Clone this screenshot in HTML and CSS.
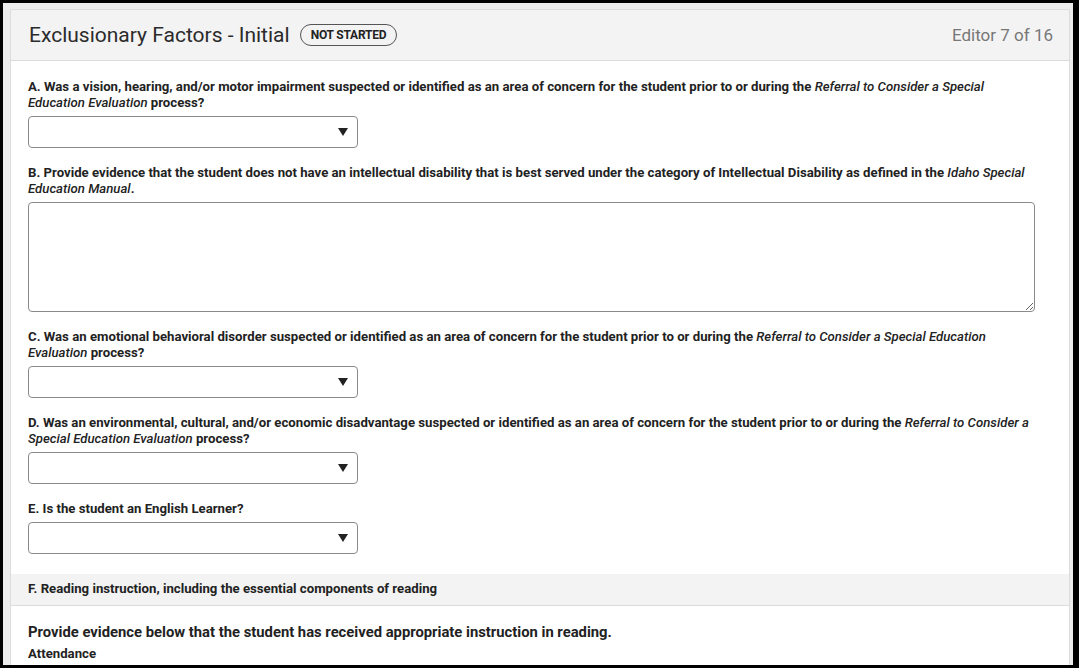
FILE: index.html
```html
<!DOCTYPE html>
<html lang="en">
<head>
    <meta charset="UTF-8">
    <meta name="viewport" content="width=device-width, initial-scale=1.0">
    <title>Exclusionary Factors - Initial</title>

    <link rel="stylesheet" href="styles.css">
</head>
<body>
    <div class="frame">
        <div class="editor">
            <div class="editor-header">
                <h1 class="editor-title">Exclusionary Factors - Initial</h1>
                <span class="status">NOT STARTED</span>
                <span class="editor-count">Editor 7 of 16</span>
            </div>

            <div class="editor-body">
                <div class="field">
                    <label class="field-label">A. Was a vision, hearing, and/or motor impairment suspected or identified as an area of concern for the student prior to or during the <i>Referral to Consider a Special Education Evaluation</i> process?</label>
                    <div class="select">
                        <select><option></option><option>Yes</option><option>No</option></select>
                        <svg class="select-arrow" width="10" height="8" viewBox="0 0 10 8"><path d="M0 0h10L5 8z" fill="#222"/></svg>
                    </div>
                </div>

                <div class="field">
                    <label class="field-label">B. Provide evidence that the student does not have an intellectual disability that is best served under the category of Intellectual Disability as defined in the <i>Idaho Special Education Manual</i>.</label>
                    <textarea class="textarea"></textarea>
                </div>

                <div class="field">
                    <label class="field-label">C. Was an emotional behavioral disorder suspected or identified as an area of concern for the student prior to or during the <i>Referral to Consider a Special Education Evaluation</i> process?</label>
                    <div class="select">
                        <select><option></option><option>Yes</option><option>No</option></select>
                        <svg class="select-arrow" width="10" height="8" viewBox="0 0 10 8"><path d="M0 0h10L5 8z" fill="#222"/></svg>
                    </div>
                </div>

                <div class="field">
                    <label class="field-label">D. Was an environmental, cultural, and/or economic disadvantage suspected or identified as an area of concern for the student prior to or during the <i>Referral to Consider a Special Education Evaluation</i> process?</label>
                    <div class="select">
                        <select><option></option><option>Yes</option><option>No</option></select>
                        <svg class="select-arrow" width="10" height="8" viewBox="0 0 10 8"><path d="M0 0h10L5 8z" fill="#222"/></svg>
                    </div>
                </div>

                <div class="field">
                    <label class="field-label">E. Is the student an English Learner?</label>
                    <div class="select">
                        <select><option></option><option>Yes</option><option>No</option></select>
                        <svg class="select-arrow" width="10" height="8" viewBox="0 0 10 8"><path d="M0 0h10L5 8z" fill="#222"/></svg>
                    </div>
                </div>
            </div>

            <div class="section-header">F. Reading instruction, including the essential components of reading</div>

            <div class="section-body">
                <h2 class="section-title">Provide evidence below that the student has received appropriate instruction in reading.</h2>
                <div class="sub-label">Attendance</div>
            </div>
        </div>
    </div>
</body>
</html>
```

FILE: styles.css
```css
html,
body {
    margin: 0;
    height: 100%;
    overflow: hidden;

    background-color: #000;

    font-family: Roboto, "Liberation Sans", Arial, sans-serif;
    color: #222;
}

.frame {
    margin: 3px 6px 0 3px;
    padding: 6px 3px 0 7px;
    height: calc(100% - 6px);
    box-sizing: border-box;
    overflow: hidden;

    background-color: #ececec;
}

.editor {
    height: 100%;

    background-color: #fff;

    border: 1px solid #dcdcdc;
    border-bottom: 0;
}

.editor-header {
    height: 50px;
    padding: 0 16px 0 18px;

    display: flex;
    align-items: center;

    background-color: #f3f3f3;

    border-bottom: 1px solid #dcdcdc;
}

.editor-title {
    margin: 0 0 1px;

    font-size: 21px;
    font-weight: 400;
    color: #2b2b2b;
}

.status {
    margin-left: 10px;
    padding: 3px 10px;

    font-size: 12px;
    font-weight: 700;
    letter-spacing: -0.2px;
    color: #222;

    border: 1px solid #555;
    border-radius: 12px;
}

.editor-count {
    margin-left: auto;

    font-size: 17px;
    color: #777;
}

.editor-body {
    padding: 18px 34px 20px 17px;
}

.field {
    margin-bottom: 17px;
}

.field:last-child {
    margin-bottom: 0;
}

.field-label {
    display: block;
    margin-bottom: 5px;

    font-size: 13.2px;
    font-weight: 700;
    line-height: 16px;
}

.field-label i {
    font-weight: 500;
}

.select {
    position: relative;
    width: 330px;
}

.select select {
    display: block;
    width: 100%;
    height: 32px;
    margin: 0;

    appearance: none;
    background-color: #fff;

    border: 1px solid #8a8a8a;
    border-radius: 4px;
}

.select-arrow {
    position: absolute;
    top: 12px;
    right: 10px;

    pointer-events: none;
}

.textarea {
    display: block;
    width: 100%;
    height: 110px;
    margin: 0;
    box-sizing: border-box;

    border: 1px solid #8a8a8a;
    border-radius: 4px;
}

.section-header {
    padding: 7px 17px 8px;

    font-size: 13.2px;
    font-weight: 700;
    line-height: 16px;

    background-color: #f3f3f3;

    border-bottom: 1px solid #dcdcdc;
}

.section-body {
    padding: 17px 17px 0;
}

.section-title {
    margin: 0 0 5px;

    font-size: 14.8px;
    font-weight: 700;
    line-height: 18px;
}

.sub-label {
    font-size: 13.2px;
    font-weight: 700;
}
```
